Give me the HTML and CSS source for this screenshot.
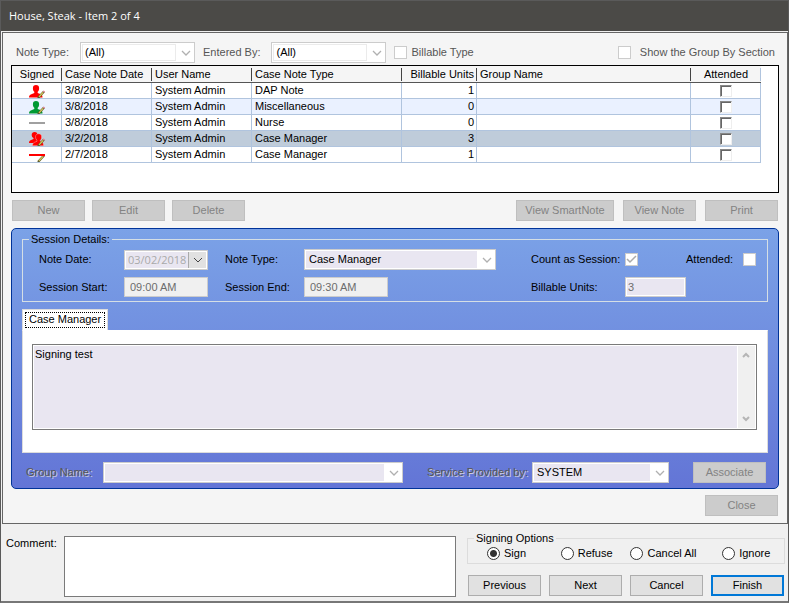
FILE: index.html
```html
<!DOCTYPE html>
<html lang="en">
<head>
    <meta charset="UTF-8">
    <title>House, Steak - Item 2 of 4</title>
    <link rel="stylesheet" href="styles.css">
</head>
<body>
    <svg class="defs" width="0" height="0">
        <symbol id="person" viewBox="0 0 16 14">
            <path fill="currentColor" d="M7 1C9 1 10.200 2.200 10.100 4.200C10.100 6 9.500 7 8.700 7.700V9L12 10.300C13.200 10.800 13.500 12 13.500 13.500H0C0 12 0.500 10.900 1.800 10.400L5.300 9V7.700C4.500 7 3.900 6 3.900 4.200C3.800 2.200 5 1 7 1Z"/>
            <use href="#pencil"/>
        </symbol>
        <symbol id="people" viewBox="0 0 16 14">
            <path fill="currentColor" d="M5.500 0C7.500 0 8.500 1.200 8.500 3L8 6L7 7.500L9 9V11H0C0 9.500 0.500 8.700 1.500 8.300L4.500 7V6C3.500 5.500 2.700 4.500 2.700 3C2.700 1.200 3.800 0 5.500 0Z"/>
            <path fill="currentColor" stroke="#fcc" stroke-width="0.400" d="M9.500 1.800C11.500 1.800 12.700 3 12.600 5C12.600 6.800 12 7.600 11.300 8.200V9.200L13.500 10.500C14.300 11 14.500 12 14.500 13.700H3.500C3.500 12 4 11 5 10.500L8 9.300V8.200C7.200 7.600 6.500 6.700 6.500 5C6.500 3 7.700 1.800 9.500 1.800Z"/>
            <use href="#pencil"/>
        </symbol>
        <symbol id="pencil" viewBox="0 0 16 14">
            <path stroke="#5a5a28" stroke-width="2.200" d="M9 14L15 7.500"/>
            <path stroke="#d6c95a" stroke-width="1.200" d="M10 12.800L14 8.500"/>
            <path stroke="#e58a9a" stroke-width="1.800" d="M14.300 8.200L15.400 7"/>
        </symbol>
    </svg>

    <header class="title-bar">House, Steak - Item 2 of 4</header>

    <main class="notes">
        <div class="filters">
            <label for="filterType">Note Type:</label>
            <select id="filterType" class="filter-select" disabled><option>(All)</option></select>
            <label for="filterUser">Entered By:</label>
            <select id="filterUser" class="filter-select" disabled><option>(All)</option></select>
            <label class="check-label"><input type="checkbox" disabled>Billable Type</label>
            <label class="check-label group-toggle"><input type="checkbox" disabled>Show the Group By Section</label>
        </div>

        <div class="grid-box">
            <table class="notes-table">
                <colgroup>
                    <col class="col-signed">
                    <col class="col-date">
                    <col class="col-user">
                    <col class="col-type">
                    <col class="col-units">
                    <col>
                    <col class="col-attended">
                </colgroup>
                <thead>
                    <tr>
                        <th class="center"><span>Signed</span></th>
                        <th><span>Case Note Date</span></th>
                        <th><span>User Name</span></th>
                        <th><span>Case Note Type</span></th>
                        <th class="right"><span>Billable Units</span></th>
                        <th><span>Group Name</span></th>
                        <th class="center"><span>Attended</span></th>
                    </tr>
                </thead>
                <tbody>
                    <tr>
                        <td class="center"><svg class="icon red"><use href="#person"/></svg></td>
                        <td>3/8/2018</td>
                        <td>System Admin</td>
                        <td>DAP Note</td>
                        <td class="right">1</td>
                        <td></td>
                        <td class="center"><input type="checkbox" aria-label="Attended" disabled></td>
                    </tr>
                    <tr class="alt">
                        <td class="center"><svg class="icon green"><use href="#person"/></svg></td>
                        <td>3/8/2018</td>
                        <td>System Admin</td>
                        <td>Miscellaneous</td>
                        <td class="right">0</td>
                        <td></td>
                        <td class="center"><input type="checkbox" aria-label="Attended" disabled></td>
                    </tr>
                    <tr>
                        <td class="center"><svg class="icon" viewBox="0 0 16 14"><path d="M0 6H16V8H0Z" fill="#a0a0a0"/></svg></td>
                        <td>3/8/2018</td>
                        <td>System Admin</td>
                        <td>Nurse</td>
                        <td class="right">0</td>
                        <td></td>
                        <td class="center"><input type="checkbox" aria-label="Attended" disabled></td>
                    </tr>
                    <tr class="selected">
                        <td class="center"><svg class="icon red"><use href="#people"/></svg></td>
                        <td>3/2/2018</td>
                        <td>System Admin</td>
                        <td>Case Manager</td>
                        <td class="right">3</td>
                        <td></td>
                        <td class="center"><input type="checkbox" aria-label="Attended" disabled></td>
                    </tr>
                    <tr>
                        <td class="center"><svg class="icon" viewBox="0 0 16 14"><use href="#pencil"/><path d="M0 6H16V8H0Z" fill="#f00"/></svg></td>
                        <td>2/7/2018</td>
                        <td>System Admin</td>
                        <td>Case Manager</td>
                        <td class="right">1</td>
                        <td></td>
                        <td class="center"><input type="checkbox" aria-label="Attended" disabled></td>
                    </tr>
                </tbody>
            </table>
        </div>

        <div class="toolbar">
            <button disabled>New</button>
            <button disabled>Edit</button>
            <button disabled>Delete</button>
            <div class="toolbar-right">
                <button class="wide" disabled>View SmartNote</button>
                <button disabled>View Note</button>
                <button disabled>Print</button>
            </div>
        </div>

        <section class="session">
            <fieldset class="details">
                <legend>Session Details:</legend>
                <div class="details-grid">
                    <label for="noteDate">Note Date:</label>
                    <div class="date-field">
                        <input id="noteDate" type="text" value="03/02/2018" disabled>
                        <button aria-label="Pick date" disabled><svg viewBox="0 0 10 6"><path d="M1 1L5 5L9 1"/></svg></button>
                    </div>
                    <label for="noteType">Note Type:</label>
                    <select id="noteType" class="session-select" disabled><option>Case Manager</option></select>
                    <label for="countSession">Count as Session:</label>
                    <input id="countSession" type="checkbox" checked disabled>
                    <label class="attended">Attended:<input type="checkbox" disabled></label>

                    <label for="sessionStart">Session Start:</label>
                    <input id="sessionStart" class="time" type="text" value="09:00 AM" disabled>
                    <label for="sessionEnd">Session End:</label>
                    <input id="sessionEnd" class="time" type="text" value="09:30 AM" disabled>
                    <label for="units">Billable Units:</label>
                    <input id="units" class="units" type="text" value="3" disabled>
                </div>
            </fieldset>

            <div class="tabs">
                <button class="tab"><span>Case Manager</span></button>
            </div>
            <div class="tab-page">
                <div class="note-box">
                    <textarea aria-label="Case Manager" readonly>Signing test</textarea>
                    <div class="scroll">
                        <svg viewBox="0 0 8 6"><path d="M1 5L4 2L7 5"/></svg>
                        <svg viewBox="0 0 8 6"><path d="M1 1L4 4L7 1"/></svg>
                    </div>
                </div>
            </div>

            <div class="session-footer">
                <label for="groupName">Group Name:</label>
                <select id="groupName" class="session-select group-name" disabled><option></option></select>
                <label for="provider">Service Provided by:</label>
                <select id="provider" class="session-select provider" disabled><option>SYSTEM</option></select>
                <button disabled>Associate</button>
            </div>
        </section>

        <div class="close-row">
            <button disabled>Close</button>
        </div>
    </main>

    <footer class="signing">
        <label for="comment">Comment:</label>
        <textarea id="comment"></textarea>
        <div class="signing-side">
            <fieldset class="options">
                <legend>Signing Options</legend>
                <div class="radios">
                    <label><input type="radio" name="signing" checked>Sign</label>
                    <label><input type="radio" name="signing">Refuse</label>
                    <label><input type="radio" name="signing">Cancel All</label>
                    <label><input type="radio" name="signing">Ignore</label>
                </div>
            </fieldset>
            <div class="wizard-buttons">
                <button>Previous</button>
                <button>Next</button>
                <button>Cancel</button>
                <button class="primary">Finish</button>
            </div>
        </div>
    </footer>
</body>
</html>
```
FILE: styles.css
```css
* {
    box-sizing: border-box;
}
body {
    display: flex;
    flex-direction: column;
    min-height: 100vh;
    margin: 0;
    background-color: #f0f0f0;
    border: 1px solid #5a5a5a;
    border-top: none;
    border-bottom: 2px solid #777;
}
body, button, input, select, textarea {
    font-family: "Liberation Sans", Arial, sans-serif;
    font-size: 11px;
    line-height: 13px;
    color: #000;
}
.defs {
    position: absolute;
}
.title-bar {
    height: 31px;
    padding: 0 8px;
    background-color: #4b4a47;
    border-top: 1px solid #5a5a5a;
    color: #fff;
    font-family: "Open Sans", sans-serif;
    font-size: 11px;
    line-height: 30px;
}
.notes {
    display: flex;
    flex-direction: column;
    margin: 1px 0 0 1px;
    padding: 9px 8px 7px;
    background-color: #f5f5f5;
    border: 1px solid #666;
}

/* shared controls */
button {
    width: 73px;
    height: 21px;
    padding: 0;
    background-color: #e1e1e1;
    border: 1px solid #adadad;
}
button:disabled {
    background-color: #ccc;
    border-color: #bfbfbf;
    color: #838383;
}
button.wide {
    width: 98px;
}
button.primary {
    border: 2px solid #0078d7;
}
input, select, textarea {
    margin: 0;
    border-radius: 0;
    outline: none;
    opacity: 1;
}
input[type="checkbox"] {
    appearance: none;
    flex: none;
    width: 13px;
    height: 13px;
    background: #fff center / 11px 11px no-repeat;
    border: 1px solid #ccc;
}
input[type="checkbox"]:checked {
    background-image: url("data:image/svg+xml,%3Csvg xmlns='http://www.w3.org/2000/svg' viewBox='0 0 11 11'%3E%3Cpath d='M1 5L4 8L10 2' fill='none' stroke='%23aaa' stroke-width='1.500'/%3E%3C/svg%3E");
}
select {
    --arrow: url("data:image/svg+xml,%3Csvg xmlns='http://www.w3.org/2000/svg' viewBox='0 0 10 6'%3E%3Cpath d='M1 1L5 5L9 1' fill='none' stroke='%23b0b0b0' stroke-width='1.300'/%3E%3C/svg%3E");
    --well: linear-gradient(#fff, #fff);
    appearance: none;
    height: 21px;
    padding: 0 22px 0 4px;
    border: 1px solid #ccc;
    background-color: #fff;
    background-repeat: no-repeat;
}
select:disabled {
    color: #000;
}

/* filters */
.filters {
    display: flex;
    align-items: center;
    padding: 0 4px 0 5px;
    height: 21px;
    color: #555;
}
.filter-select {
    width: 115px;
    margin: 0 8px 0 11px;
    background-image: var(--arrow), var(--well), linear-gradient(#ebebeb, #ebebeb);
    background-size: 10px 6px, calc(100% - 21px) calc(100% - 4px), calc(100% - 19px) calc(100% - 2px);
    background-position: right 3px center, 2px 2px, 1px 1px;
}
.check-label {
    display: flex;
    align-items: center;
    gap: 4px;
}
.group-toggle {
    gap: 9px;
    margin-left: auto;
}

/* note list */
.grid-box {
    height: 128px;
    margin-top: 2px;
    padding-right: 17px;
    background-color: #fff;
    border: 1px solid #000;
}
.notes-table {
    width: 100%;
    table-layout: fixed;
    border-collapse: separate;
    border-spacing: 0;
}
.col-signed { width: 50px; }
.col-date { width: 90px; }
.col-user { width: 100px; }
.col-type { width: 150px; }
.col-units { width: 75px; }
.col-attended { width: 70px; }
.notes-table th {
    height: 17px;
    padding: 2px 0 1px;
    background-color: #f5f5f5;
    border-bottom: 1px solid #555;
    font-weight: normal;
    text-align: left;
}
.notes-table th span {
    display: block;
    padding: 0 2px 0 3px;
    border-right: 1px solid #444;
}
.notes-table th:last-child span {
    border-color: #b0c4de;
}
.notes-table td {
    height: 16px;
    padding: 0 2px 0 3px;
    border-right: 1px solid #b0c4de;
    border-bottom: 1px solid #b0c4de;
    line-height: 15px;
}
.notes-table .alt {
    background-color: #eaf1ff;
}
.notes-table .selected {
    background-color: #bfccda;
}
.notes-table .center {
    text-align: center;
}
.notes-table .right {
    text-align: right;
}
.notes-table input[type="checkbox"] {
    display: block;
    width: 12px;
    height: 12px;
    margin: 0 auto;
    border: 1px solid #eee;
    border-top-color: #888;
    border-left-color: #888;
    box-shadow: inset 1px 1px #666;
}
.icon {
    display: block;
    width: 16px;
    height: 14px;
    margin: 0 auto;
}
.red {
    color: #f00;
}
.green {
    color: #093;
}
.toolbar {
    display: flex;
    gap: 7px;
    margin: 7px 1px;
}
.toolbar-right {
    display: flex;
    gap: 9px;
    margin-left: auto;
}

/* session panel */
.session {
    padding: 4px 10px;
    background: linear-gradient(#7ba2e7, #6375d6);
    border: 1px solid #039;
    border-radius: 5px;
}
.details {
    min-width: 0;
    margin: 0;
    padding: 3px 11px 4px 16px;
    border: 1px solid #d5dfe5;
}
.details legend {
    margin-left: -10px;
    padding: 0 2px;
}
.details-grid {
    display: grid;
    grid-template-columns: 85px 101px 79px minmax(0, 1fr) 94px 61px 70px;
    row-gap: 7px;
    align-items: center;
}
.date-field {
    display: flex;
    width: 84px;
    height: 20px;
    padding: 1px;
    background-color: #fff;
    border: 1px solid #ccc;
}
.date-field input {
    flex: 1;
    min-width: 0;
    padding: 0 0 0 2px;
    background-color: #e9e6f1;
    border: none;
    color: #aaa;
    font-family: "Open Sans", sans-serif;
}
.date-field button {
    width: 18px;
    height: 16px;
    background-color: #e1e1e1;
    border: none;
    border-left: 1px solid #aaa;
}
.date-field svg {
    display: block;
    width: 10px;
    height: 6px;
    margin: 0 auto;
    fill: none;
    stroke: #444;
}
.session-select {
    --well: linear-gradient(#e9e6f1, #e9e6f1);
    background-image: var(--arrow), var(--well);
    background-size: 10px 6px, calc(100% - 19px) calc(100% - 2px);
    background-position: right 3px center, 1px 1px;
}
.details .session-select {
    width: calc(100% - 35px);
}
.attended {
    display: flex;
    align-items: center;
    justify-content: space-between;
}
.time, .units {
    height: 20px;
    border: 1px solid #ccc;
    color: #6d6d6d;
}
.time {
    width: 84px;
    padding: 0 5px;
    background-color: #f0f0f0;
}
.units {
    padding: 0 2px;
    background-color: #e9e6f1;
    box-shadow: inset 0 0 0 1px #fff;
}
.tabs {
    display: flex;
    margin-top: 7px;
}
.tab {
    width: auto;
    height: 21px;
    padding: 2px;
    background-color: #fff;
    border: 1px solid #dcdcdc;
    border-bottom: none;
}
.tab span {
    display: block;
    padding: 0 3px 1px;
    border: 1px dotted #000;
}
.tab-page {
    padding: 13px 10px 22px 9px;
    background-color: #fff;
    border: 1px solid #dcdcdc;
    border-top-color: #fff;
}
.note-box {
    display: flex;
    padding: 1px;
    background-color: #fff;
    border: 1px solid #7a7a7a;
}
.note-box textarea {
    flex: 1;
    height: 82px;
    padding: 2px 1px;
    background-color: #e9e6f1;
    border: none;
    resize: none;
}
.scroll {
    display: flex;
    flex-direction: column;
    justify-content: space-between;
    width: 17px;
    margin-left: 1px;
    padding: 6px 4px;
    background-color: #f0f0f0;
}
.scroll svg {
    width: 8px;
    height: 6px;
    fill: none;
    stroke: #b5b5b5;
    stroke-width: 2;
}
.session-footer {
    display: flex;
    align-items: center;
    margin-top: 9px;
    padding: 0 2px 1px 4px;
}
.session-footer label {
    color: #555;
    text-shadow: 1px 1px #ccd;
}
.group-name {
    flex: 1;
    min-width: 0;
    margin: 0 24px 0 11px;
}
.provider {
    width: 137px;
    margin: 0 24px 0 4px;
}
.close-row {
    display: flex;
    justify-content: flex-end;
    margin: 6px 1px 0;
}

/* comment and signing */
.signing {
    display: flex;
    flex: 1;
    padding: 8px 3px 4px 5px;
}
.signing > label {
    width: 58px;
    padding-top: 5px;
}
#comment {
    flex: 1;
    min-width: 0;
    margin-top: 4px;
    border: 1px solid #7a7a7a;
    resize: none;
}
.signing-side {
    display: flex;
    flex-direction: column;
    width: 318px;
    margin-left: 11px;
}
.options {
    min-width: 0;
    margin: 0;
    padding: 2px 12px 3px 19px;
    border: 1px solid #dcdcdc;
}
.options legend {
    margin-left: -13px;
    padding: 0 2px;
}
.radios {
    display: grid;
    grid-template-columns: 74fr 70fr 92fr 50fr;
}
.radios label {
    display: flex;
    align-items: center;
    gap: 4px;
}
.radios input {
    appearance: none;
    flex: none;
    width: 13px;
    height: 13px;
    background-color: #fff;
    border: 1px solid #333;
    border-radius: 50%;
}
.radios input:checked {
    background: radial-gradient(circle, #333 3px, #fff 4px);
}
.wizard-buttons {
    display: flex;
    gap: 8px;
    margin: auto 1px 1px;
}
```
